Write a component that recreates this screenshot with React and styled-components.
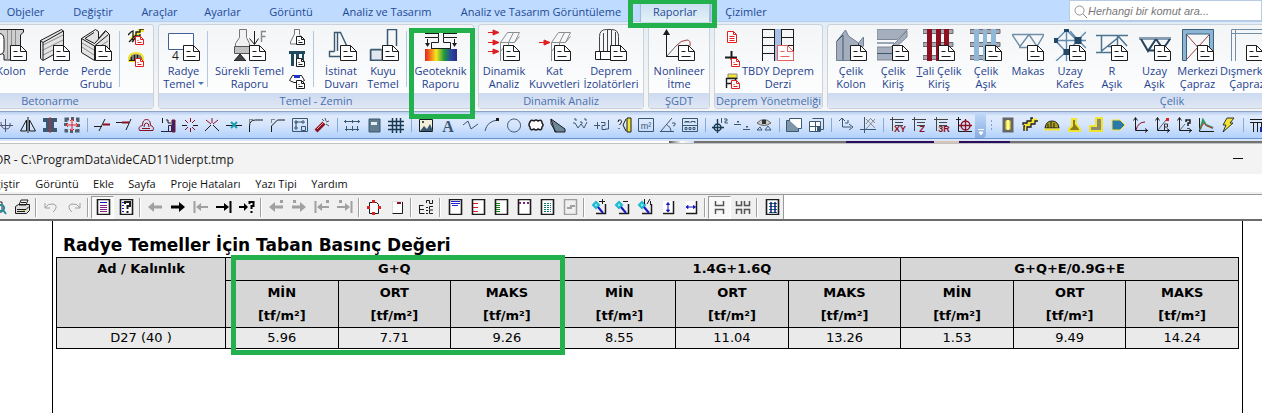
import { useState } from "react";
import styled, { createGlobalStyle, css } from "styled-components";

const INK = "#1c1c1c";
const STEEL = "#3b5872";
const RED = "#e02020";
const MAROON = "#8c1020";
const YELLOW = "#f2e530";
const GREEN = "#23b14d";

const uiFont = css`
  font-family: "Open Sans", "Noto Sans", sans-serif;
  font-size: 11px;
`;

const GlobalStyle = createGlobalStyle`
  *,
  *::after {
    box-sizing: border-box;
  }
  body {
    margin: 0;
    background: #fff;
  }
  button {
    padding: 0;
    border: 0;
    background: none;
    color: inherit;
    font: inherit;
  }
`;

const Shell = styled.div`
  ${uiFont}
  display: flex;
  flex-direction: column;
  min-height: 100vh;
  overflow: hidden;
`;

const highlight = css`
  content: "";
  position: absolute;
  border: 5px solid ${GREEN};
  pointer-events: none;
  z-index: 5;
`;

const TabBar = styled.nav`
  display: flex;
  align-items: flex-start;
  height: 22px;
  background: #bfdbff;
  border-bottom: 1px solid #b4cdec;
  color: #1e4a94;
`;

const Tab = styled.button`
  flex: 0 0 ${(p) => p.$width}px;
  height: 24px;
  line-height: 24px;
  white-space: nowrap;
`;

const ActiveTab = styled(Tab)`
  position: relative;
  height: 22px;
  margin-left: 11px;
  background: linear-gradient(#c6dcf2, #e4f2f7);
  border: solid #a3bedb;
  border-width: 0 1px;
  box-shadow: 1px 0 2px #8fa9c4;

  &::after {
    ${highlight}
    inset: -1px -8px -6px -13px;
  }
`;

const Search = styled.label`
  display: flex;
  align-items: center;
  gap: 1px;
  flex: 0 0 193px;
  height: 21px;
  margin-left: auto;
  padding-left: 3px;
  background: #fff;
  border: 1px solid #b9cbe2;
`;

const SearchInput = styled.input`
  flex: 1;
  min-width: 0;
  padding: 0;
  border: 0;
  outline: 0;
  background: none;
  font: italic 11px "Liberation Sans", Arial, sans-serif;

  &::placeholder {
    color: #777;
  }
`;

const Ribbon = styled.div`
  display: flex;
  gap: 4px;
  height: 89px;
  margin-left: -54px;
  padding: 2px 0 2px;
  background: linear-gradient(#e0edf6, #eef1f4 30%, #f4f5f6);
`;

const Group = styled.section`
  display: flex;
  flex-direction: column;
  flex: 0 0 ${(p) => p.$width}px;
  border: 1px solid #cbd2da;
  border-radius: 3px;
  background: linear-gradient(#f3f5f7, #fff);
`;

const GroupItems = styled.div`
  display: flex;
  flex: 1;
  padding-left: ${(p) => p.$indent}px;
`;

const GroupTitle = styled.h2`
  height: 15px;
  margin: 0;
  background: linear-gradient(#ccdaf0, #e0e7f4);
  color: #4a70ae;
  font-size: 11px;
  font-weight: 400;
  line-height: 16px;
  text-align: center;
  white-space: nowrap;
`;

const BigButton = styled.button`
  display: flex;
  flex-direction: column;
  align-items: center;
  flex: 0 0 ${(p) => p.$width}px;
  min-width: 0;
  padding-top: 4px;
  color: #1e3f8f;
  line-height: 13px;
  white-space: nowrap;

  ${(p) =>
    p.$marked &&
    css`
      position: relative;

      &::after {
        ${highlight}
        inset: 3px -2px -26px 1px;
      }
    `}
`;

const Label = styled.span`
  display: block;
  padding-top: 3px;
`;

const Caret = styled.i`
  display: inline-block;
  margin: 0 0 3px 3px;
  border: solid transparent;
  border-width: 3px 3px 0;
  border-top-color: #4a78b8;
`;

const RibbonSeparator = styled.span`
  flex: 0 0 ${(p) => p.$width}px;
  height: 56px;
  margin-top: 6px;
  background: linear-gradient(#b4c7e0, #b4c7e0) center / 1px 100% no-repeat;
`;

const SmallStack = styled.div`
  display: flex;
  flex-direction: column;
  align-items: center;
  gap: 6px;
  flex: 0 0 ${(p) => p.$width}px;
  padding-top: 4px;
`;

const StackButton = styled.button`
  display: flex;
`;

const ToolStrip = styled.div`
  display: flex;
  align-items: center;
  height: 28px;
  border-top: 1px solid #8fa5c4;
  border-bottom: 1px solid #6792cf;
  background: linear-gradient(#b8cff0, #dfeafc 15%, #d6e5fc 50%, #b1d1fc);
`;

const Tool = styled.button`
  display: flex;
  align-items: center;
  justify-content: center;
  flex: 0 0 22px;
  height: 24px;

  &:first-child {
    margin-left: -5px;
  }
`;

const ToolDivider = styled.span`
  flex: 0 0 8px;
  height: 14px;
  background: linear-gradient(#84aade, #84aade) 4px 0 / 1px 100% no-repeat;
`;

const Overflow = styled.span`
  display: flex;
  align-items: flex-end;
  justify-content: center;
  flex: 0 0 11px;
  height: 26px;
  padding-bottom: 2px;
  border-radius: 0 4px 4px 0;
  background: linear-gradient(#c3daf9, #86acdf);
`;

const Grip = styled.span`
  flex: 0 0 11px;
  height: 13px;
  background: radial-gradient(#7aa3da 1px, transparent 1px) 3px 0 / 5px 4px;
  background-repeat: repeat-y;
`;

const Backdrop = styled.div`
  height: 5px;
  border-top: 2px solid #d8e5f6;
  border-bottom: 1px solid #c2c2c2;
  background: linear-gradient(
    90deg,
    #fff 53%,
    #555 53%,
    #fff 54%,
    #c9daf0 55%,
    #70736f 55%,
    #70736f 67%,
    #2a0d5c 67%,
    #2a0d5c 74%,
    #d8c4b8 74%,
    #d8c4b8 76%,
    #2a0d5c 76%,
    #2a0d5c 80%,
    #70736f 80%
  );
`;

const TitleBar = styled.header`
  display: flex;
  align-items: center;
  justify-content: space-between;
  height: 30px;
  padding-right: 19px;
  background: #f3f3f3;
  color: #1a1a1a;
`;

const WindowTitle = styled.h1`
  margin: 0 0 0 -6px;
  font-size: 12px;
  font-weight: 400;
  white-space: nowrap;
`;

const Minimize = styled.button`
  width: 10px;
  height: 10px;
  background: linear-gradient(#111, #111) 0 4px / 100% 1px no-repeat;
`;

const MenuBar = styled.nav`
  display: flex;
  height: 20px;
  margin-left: -28px;
  border-bottom: 2px solid #f0f0f0;
  background: #fff;
  color: #111;
`;

const MenuItem = styled.button`
  flex: 0 0 ${(p) => p.$width}px;
  line-height: 20px;
  white-space: nowrap;
`;

const ReportTools = styled.div`
  display: flex;
  height: 27px;
  border-top: 1px solid #999;
  border-bottom: 2px solid #6c6c6c;
`;

const ReportToolSet = styled.div`
  display: flex;
  align-items: center;
  margin-left: -13px;
  background: #f0f0f0;
  border-right: 1px solid #999;
`;

const ReportTool = styled.button`
  display: flex;
  align-items: center;
  justify-content: center;
  flex: 0 0 23px;
  height: 23px;
  background: ${(p) => (p.$pressed ? "#f8f8f8" : "none")};
  border: 1px solid transparent;
  border-color: ${(p) => (p.$pressed ? "#999 #fff #fff #999" : "transparent")};
`;

const ReportDivider = styled.span`
  flex: 0 0 6px;
  height: 19px;
  background: linear-gradient(90deg, #a0a0a0 50%, #fff 50%) 2px 0 / 2px 100%
    no-repeat;
`;

const Page = styled.main`
  flex: 1;
  margin: 0 19px 0 52px;
  padding: 12px 3px 0;
  border: solid #000;
  border-width: 0 1px;
  color: #000;
  font-family: "DejaVu Sans", Verdana, sans-serif;
`;

const ReportTitle = styled.h2`
  margin: 0;
  padding-left: 7px;
  font-size: 17px;
  line-height: 24px;
`;

const ReportTable = styled.table`
  width: 100%;
  table-layout: fixed;
  border-collapse: collapse;
  font-size: 13px;
  text-align: center;
`;

const NameColumn = styled.col`
  width: 169px;
`;

const HeadCell = styled.th`
  padding: 0;
  border: 1px solid #000;
  background: #d6d6d6;
  line-height: ${(p) => (p.$units ? 23 : 22)}px;
  vertical-align: top;

  ${(p) =>
    p.$marked &&
    css`
      position: relative;

      &::after {
        ${highlight}
        top: -3px;
        left: 5px;
        right: -2px;
        height: 100px;
      }
    `}
`;

const Cell = styled.td`
  padding: 0;
  border: 1px solid #000;
  background: #eaeaea;
  line-height: 20px;
`;

// Each stroke is [path, stroke, fill, width].
const Strokes = ({ of }) =>
  of.map(([d, stroke = INK, fill = "none", width = 1], i) => (
    <path key={i} d={d} stroke={stroke} fill={fill} strokeWidth={width} />
  ));

const Glyph = ({ of, size = 16, children }) => (
  <svg
    width={size}
    height={size}
    viewBox={`0 0 ${size} ${size}`}
    aria-hidden="true"
  >
    <Strokes of={of} />
    {children}
  </svg>
);

const sheet = (color = INK) => [
  ["M15.5 16.5h10l6 6v9h-16z", color, "#fff"],
  ["M25.5 16.5v6h6M18.5 22.5h4M18.5 27.5h9", color],
];

const smallSheet = (color = INK) => [
  ["M7.5 7.5h5l3 3v5h-8z", color, "#fff"],
  ["M12.5 7.5v3h3M9.5 11.5h1M9.5 13.5h4", color],
];

const FRAME = "M19.5 3.5h12l-5 10h-14zM25.5 3.5l-5 10M12.5 13.5V32M20.5 13.5V22M12.5 22.5l4-5M26.5 13.5l5-6";
const arrowRight = (y) => `M0 ${y}h6M5 ${y - 2.5}l6 2.5l-6 2.5z`;

const big = {
  kolon: [
    ["M4 .5H28.5V3L25.5 6V31H9V26L4 22z", INK, "#cfcfcf"],
    ["M12.5 1v30M16.5 1v30M20.5 1v30", "#8b8b8b"],
    ["M4 4.5q5 0 5 6v10q0 5-5 5", INK, "#fff"],
  ],
  perde: [
    ["M2.5 11.5L23.5.5l2 1.5v18L5 31.5l-2.5-2z", INK, "#e4e4e4"],
    ["M5 16L25 6M5 21l20-10M5 26l20-10", "#8b8b8b"],
    ["M2.5 11.5L5 13.5V31M5 13.5L25.5 2", INK],
  ],
  perdeGrubu: [
    ["M1.5 9.5L15.5.5l3 2v7l7-8 4 4V22L14.5 31.5l-13-8z", INK, "#e4e4e4"],
    ["M2 14l12 7 14-9M2 18l12 8 14-9", "#8b8b8b"],
    ["M1.5 9.5l13 7.5v14M14.5 17l14-11.5M5 9.5l9-6M5 9.5l9.5 5 11-12", INK],
  ],
  radye: [["M.5 4.5h25v16H.5z", "#3d5f9a", "#fff"]],
  surekli: [
    ["M5.5.5h7v8l3 6v3H1.5v-3l4-6z", "#777", "#f1f1f1"],
    ["M.5 17.5h16v7H.5z", "#555", "#c2c2c2"],
    ["M6 25l6 7H0z", INK, "#444"],
    ["M20.5 2v13M15.5 9.5l5 6 4-6", INK],
    ["M27.5 13V2.5h5M27.5 7.5h4", "#888", "none", 1.4],
  ],
  istinat: [
    ["M9.5 22.5V3.5h6l7 15M9.5 22.5h-5v5H15M12.5 22V3.5", STEEL, "none", 1.4],
  ],
  kuyu: [
    ["M20.5 22V.5h9V17M3.5 20.5h11M3.5 20.5v11H15", STEEL, "none", 1.5],
    ["M4 21h11v10H4z", STEEL, "#e2e7ed"],
  ],
  geoteknik: [
    ["M0 8.5h13.5V4M0 4.5h13.5V0M32 8.5H18.5V0M32 4.5H18.5", INK],
    ["M6.5 20v-6.5h7V9M25.5 20v-6.5h-7V9M6 19.5h20", INK],
    ["M2.5 10v5M29.5 10v5", INK],
    ["M0 14h5l-2.5 4zM27 14h5l-2.5 4z", "none", INK],
  ],
  dinamik: [
    [FRAME, "#8d8d8d"],
    [arrowRight(3.5) + arrowRight(13.5) + arrowRight(22.5), RED, RED],
  ],
  kat: [
    [FRAME, "#8d8d8d"],
    [arrowRight(13.5), RED, RED],
  ],
  izolator: [
    ["M4.5 23V7.5q0-7 7-7h5q7 0 7 7V22M8.5 23V4M12.5 23V1M16.5 23V1M20.5 20V3", "#444"],
    ["M.5 22.5h17v8H.5zM5.5 22.5v8", INK, "#fff"],
  ],
  nonlineer: [
    ["M3.5 28V4M3.5 27.5H16", INK],
    ["M0 6h7L3.5 0z", "none", INK],
    ["M4 27L13 17", "#666"],
    ["M13 17q5-6 11-6q4 0 3 6", "#a33c3c"],
  ],
  tbdy: [
    ["M13 0h6v32h-6z", "none", "#a7c0e6"],
    ["M.5 0v32M12.5 0v32M19.5 0v32M31.5 0v32M0 .5h13M0 8.5h13M0 16.5h13M0 24.5h13M19 .5h13M19 8.5h13M19 16.5h13", INK],
  ],
  celikKolon: [
    ["M1.5 31.5v-19L10.5 1l3 6 10 7 5-6v9L15 31.5z", "#6f7f95", "#a5aebd"],
    ["M8 31V6M1.5 12.5L8 6M23.5 14v8", STEEL],
  ],
  celikKiris: [
    ["M0 0h31L20 10.5H0z", "#7b8794", "#a5aebd"],
    ["M0 18h14L30 2v6L18 19v12H0z", "#7b8794", "#a5aebd"],
    ["M0 24.5h17M0 14h17", STEEL],
  ],
  tali: [
    ["M0 .5h30v4H0zM0 13.5h30v4H0zM0 26.5h30v4H0z", "#6b6b78", "#a9a9b4"],
    ["M4.5 0h4v32h-4zM13.5 0h4v32h-4zM21.500 0h4v32h-4z", MAROON, MAROON],
  ],
  asik: [
    ["M0 .5h30v4H0zM0 13.5h30v4H0zM0 26.5h30v4H0z", "#6b6b78", "#a9a9b4"],
    ["M4 0h5v32H4zM13 0h4v32h-4zM21 0h5v32h-5z", "none", "#8fb8d8"],
  ],
  makas: [
    ["M0 5.5h32M0 5.5l8 12 9-12 8 12 7-12M7 18.5h18", "#6f8fa8", "none", 1.4],
  ],
  uzayKafes: [
    ["M12.5 1L1.5 12l11 11 11-11zM12.5 0v32M0 11.5h32M24 11L32 3M24 11l8 8M24 11l-8-9M12 23L2 32M12 23l-8-9", "#5f8cb0", "none", 1.4],
    ["M20.5 8h7v7h-7zM9.5 20h6v6h-6zM10 0h5v3h-5zM0 9h4v5H0z", "none", "#234766"],
  ],
  rAsik: [
    ["M0 6.5h32M0 23.5h16M5.5 7v16M5.5 22L23 8l8 9M12 17.5h14M21.5 7v10", "#4c7390", "none", 1.5],
  ],
  uzayAsik: [
    ["M0 9.5h32M2 10l7 12 8-12 7 10 7-10M8 21.5h16", "#27425c", "none", 2],
    ["M0 9.5h32", "#7fa3be"],
  ],
  merkezi: [
    ["M.5.5h31v31h-4V5h-23v26.5h-4z", "#38607f", "#8db4d2"],
    ["M5 6l21 24M27 6L5 30", "#a84040"],
  ],
  dismerkez: [
    ["M.5 32V.5H32M4.5 32V4.5H32M.5 4.5h4V.5", "#6f8fa8"],
  ],
};

const small = {
  stairs: [
    ["M7 4.5h4v-3h5M3 10l4-4", YELLOW, "none", 3],
    ["M0 6l3-3 2-1v11M1 13L8 6V3h4V0h4M4 13l5-6h3V5", INK, "none", 1.3],
  ],
  dome: [
    ["M.5 10q0-8 7.5-8t7.5 8z", YELLOW, "#777", 2],
    ["M3.5 10V6M6.5 10V4M9.5 10V4M1 9.5h14", INK],
  ],
  footing: [["M5.5 0v5l-4 8v2h7M5.5.5h5v5l2 3", "#777", "#fff"]],
  piles: [["M0 0h16v3H0zM2 3h3v12H2zM7 3h3v12H7zM13 3h2v6h-2z", "none", "#1d4a5e"]],
  raft: [
    ["M.5 7.5l3-5h9l3 5-4 2H5z", INK, "#fff"],
    ["M5 2h6v3H5z", "none", "#2233cc"],
  ],
  sheetOnly: [
    ["M3.5 2.5h6l3 3v8h-9z", RED, "#fff"],
    ["M9.5 2.5v3h3M5.5 7.5h5M5.5 9.5h5M5.5 11.5h5", RED],
  ],
  joint: [["M7.5 0v9M1 6.5h12", INK, "none", 2]],
  storey: [
    ["M4 1h9v4H4z", "#888", YELLOW],
    ["M2.5 15V5.5h11M2.5 10.5h6M11.5 6v4", INK, "none", 1.4],
  ],
};

const stacked = (shape, color) => [...shape, ...smallSheet(color)];

const ribbonGroups = [
  {
    title: "Betonarme",
    width: 208,
    indent: 43,
    items: [
      { icon: "kolon", lines: ["Kolon"], width: 42 },
      { icon: "perde", lines: ["Perde"], width: 43 },
      { icon: "perdeGrubu", lines: ["Perde", "Grubu"], width: 42 },
      { separator: 5 },
      {
        width: 28,
        stack: [
          ["Merdiven", stacked(small.stairs, RED)],
          ["Kubbe", stacked(small.dome, RED)],
        ],
      },
    ],
  },
  {
    title: "Temel - Zemin",
    width: 315,
    indent: 4,
    items: [
      { icon: "radye", lines: ["Radye", "Temel"], width: 41, caret: true },
      { separator: 6 },
      { icon: "surekli", lines: ["Sürekli Temel", "Raporu"], width: 79 },
      {
        width: 16,
        stack: [
          ["Tekil Temel", stacked(small.footing)],
          ["Kazık", stacked(small.piles)],
          ["Kazık Başlığı", stacked(small.raft)],
        ],
      },
      { separator: 16 },
      { icon: "istinat", lines: ["İstinat", "Duvarı"], width: 40 },
      { icon: "kuyu", lines: ["Kuyu", "Temel"], width: 44 },
      { separator: 3 },
      {
        icon: "geoteknik",
        lines: ["Geoteknik", "Raporu"],
        width: 65,
        marked: true,
        plain: true,
      },
    ],
  },
  {
    title: "Dinamik Analiz",
    width: 166,
    indent: 2,
    items: [
      { icon: "dinamik", lines: ["Dinamik", "Analiz"], width: 46 },
      { icon: "kat", lines: ["Kat", "Kuvvetleri"], width: 55 },
      { icon: "izolator", lines: ["Deprem", "İzolatörleri"], width: 58 },
    ],
  },
  {
    title: "ŞGDT",
    width: 62,
    indent: 0,
    items: [{ icon: "nonlineer", lines: ["Nonlineer", "İtme"], width: 60 }],
  },
  {
    title: "Deprem Yönetmeliği",
    width: 109,
    indent: 4,
    items: [
      {
        width: 26,
        stack: [
          ["Düzensizlik Raporu", small.sheetOnly],
          ["Birleşim Raporu", stacked(small.joint, RED)],
          ["Kat Raporu", stacked(small.storey, RED)],
        ],
      },
      { icon: "tbdy", lines: ["TBDY Deprem", "Derzi"], width: 66, color: "#e86060" },
    ],
  },
  {
    title: "Çelik",
    width: 690,
    indent: 2,
    items: [
      { icon: "celikKolon", lines: ["Çelik", "Kolon"], width: 42 },
      { icon: "celikKiris", lines: ["Çelik", "Kiriş"], width: 42 },
      { icon: "tali", lines: [<><u>T</u>ali Çelik</>, "Kiriş"], width: 50 },
      { icon: "asik", lines: ["Çelik", "Aşık"], width: 44 },
      { icon: "makas", lines: ["Makas"], width: 40 },
      { icon: "uzayKafes", lines: ["Uzay", "Kafes"], width: 44 },
      { icon: "rAsik", lines: ["R", "Aşık"], width: 40 },
      { icon: "uzayAsik", lines: ["Uzay", "Aşık"], width: 45 },
      { icon: "merkezi", lines: ["Merkezi", "Çapraz"], width: 41 },
      { icon: "dismerkez", lines: ["Dışmerkez", "Çapraz"], width: 58 },
    ],
  },
];

const AXES = "M3.5 1v12.5H16M1.5 3.5l2-3 2 3M13 11.5l2.5 2-2.5 2";
const AXIS_BOX = "M2.5 0v14M0 2.5h14M5 5.5h8M5 8.5h8";

// null is a divider, a third value is text drawn over the strokes.
const tools = [
  ["Döndür", [["M0 8.5h15M7.5 2v13M3 5q0 7 5 7t4-6", "#557"]]],
  ["Aynala", [["M6.5 3v11h-6zM9.5 3v11h6z", INK], ["M8 0v16", INK]]],
  ["Hizala", [["M1 1h14v4h-3v6h3v4H1v-4h3V5H1z", "none", STEEL], ["M8 0v16", RED]]],
  ["Taşı", [["M2 5V2h3M7 1.5h3M12 2h2v3M14.500 7v3M14 12v2h-3M9 14.500H6M4 14H2v-2M1.500 9V6", "#4c6070", "none", 3], ["M2 8h12M8 2v12M6 4l2-2 2 2M6 12l2 2 2-2M4 6L2 8l2 2M12 6l2 2-2 2", RED]]],
  null,
  ["Kes", [["M0 9.5h8M5 14l6-12", INK], ["M9 7.5h7", MAROON, "none", 2]]],
  ["Uzat", [["M0 5.5h6M10 13l5-11", INK], ["M6 5.5h7", MAROON, "none", 2]]],
  ["Ötele", [["M1.5 13.5q-2-4 3-5q0-6 4-6t4 6q4 1 2.5 5z", MAROON], ["M4 11.5h8M6 10q0-4 2.5-4t2.5 4", MAROON]]],
  ["Ölçekle", [["M1 14.5h14M8.5 14V8.5h3V14", "#224"], ["M12 3h3v12h-3z", MAROON, "#1a2a88"], ["M2.5 1v5M6 3h2v3h3", INK]]],
  ["Böl", [["M0 8.5h5M11 8.5h5", INK], ["M8.5 1v4M8.5 11v4M3 3l3 3M13 3l-3 3M10 10l3 3M6 10l-3 3", MAROON]]],
  ["Birleştir", [["M1 14l6-6M15 14L9 8", INK], ["M8 1v5M2 3l5 4M14 3L9 7", MAROON]]],
  ["Yakala", [["M0 8.5h16", INK], ["M5 5l6 6M11 5l-6 6", "#1a9bb0", "none", 2]]],
  ["Yuvarlat", [["M1.5 15V9q0-6 6-6H15", INK], ["M1.5 2v4M1 2.5h4", "#888"]]],
  ["Pah", [["M1.5 15V9l6-6H15", INK], ["M1.5 2v4M1 2.5h4", "#888"]]],
  ["Gruplandır", [["M.5 1.5h15v13H.5z", STEEL], ["M3 4h2v2H3zM10 4h2v2h-2zM3 10h2v2H3zM9.5 9.5h4v4h-4zM4 5h6M4 5v5", STEEL]]],
  ["Patlat", [["M2 14L10 6", MAROON, "none", 4], ["M3 12l7-7", "#f0a0a0"], ["M11 1l1 3M15 4l-3 1M15 9l-3-2M8 2l2 2", "#555"]]],
  null,
  ["Ölçü", [["M1.5 3v3M8.5 3v3M14.5 3v3M0 4.5h16M2.5 9v5M8.5 9v5M13.5 9v5M1 12.5h14", STEEL]]],
  ["Kütüphane", [["M3 2h11v13H3z", STEEL, "#5f7d8f"], ["M5 5h6v3H5z", "none", "#e5eef2"]]],
  ["Izgara", [["M0 4.5h16M0 8.5h16M0 12.5h16M4.5 1v15M8.5 1v15M12.5 1v15", "#173a50", "none", 1.5]]],
  null,
  ["Resim", [["M1.5 2.5h13v12h-13z", INK, "#f3efd8"], ["M2 14l4-5 3 3 3-5 3 7z", "none", STEEL], ["M4 4h2v2H4z", "none", STEEL]]],
  ["Metin", [], "A"],
  ["Çoklu Çizgi", [["M1 8l5-4 3 8 7-5", STEEL]]],
  ["Yay", [["M1 14q2-10 13-11", STEEL], ["M12 1h3v3h-3z", "none", INK]]],
  ["Daire", [["M8 2a6.5 6.5 0 1 0 .1 0z", STEEL]]],
  ["Revizyon Bulutu", [["M2 5q1-3 4-1q2-2 4 0q4-2 4 2q2 2 0 4q0 4-4 2q-2 2-4 0q-4 2-4-2q-2-2 0-5z", INK, "#fff", 1.5]]],
  ["Tarama", [["M1 2l14 10v3H5z", INK, "#6c8798"], ["M1 2v5l5 8", INK]]],
  ["Eğri", [["M1 6h2l3 5 3-4 3 4 3-6", STEEL], ["M2 2h2v2M8 5h2v2M12 2h2v2", STEEL]]],
  ["Kot", [["M0 8.5h6M3.5 5v7M7 5.5h4v3H8v4h4M14.5 3v9h-3", STEEL]]],
  ["Sorgula", [["M2 5q0-3 2.5-2t-1 5M3 11v1M10 2l-3 6 3 6", INK], ["M11 1h4v14h-4z", INK, YELLOW]]],
  ["Alan", [["M.5 1.5h15v13H.5z", STEEL]], "m²"],
  ["Açı", [["M0 14.5h14M1 14L12 1M7 8q4 2 4 6", STEEL], ["M12 6h3v2l-2 1", STEEL]]],
  ["Metraj", [["M.5 1.5h15v13H.5zM.5 8.5h15M3 6V4.5h4V6M5 6V4M9 6V4.5h4V6M3 10.5h2v2H3zM7 10.5h2v2H7zM11 10.5h2v2h-2z", STEEL]]],
  null,
  ["Kot Noktası", [["M0 10.5h12M5.5 2v14M5.5 7a3.5 3.5 0 1 0 .1 0z", "#173a50", "none", 1.4], ["M9.5 1v5M12 2h3v2h-2v2h3", STEEL]]],
  ["Kot Farkı", [["M0 7.5h7M9 12.5h7M3 5l1-1 1 1zM12 10l1-1 1 1z", STEEL]]],
  ["Görünüm", [["M1 6q7-7 14 0q-7 5-14 0z", "#666", "#ccc"], ["M6 3h4v4H6z", "none", "#333"], ["M1 13h5l-2-3zM9 13h6l-3-4z", STEEL]]],
  null,
  ["Katman", [["M3.5 1.5h12v10h-12z", STEEL, "#fff"], ["M3.5 3.5h-3v11h12v-3", STEEL, "#7d95a8"]]],
  ["Pencereler", [["M1.5 4.5h11v10h-11z", STEEL, "#fff"], ["M4.5 1.5h11v11h-3M7.5 4v10M2 9.5h11", STEEL], ["M9 9h4v5H9z", "none", STEEL]]],
  null,
  ["Eksen", [["M1 4l3-3 3 3M4.5 1v9H13M11 7l4 3-4 3M7 6h3v-3", STEEL]]],
  ["Eksen Izgarası", [["M4.5 0v16M0 12.5h16", STEEL], ["M6 2l9 9M10 1l5 5M6 7l4-5M6 12L15 2", "#8a8a8a"]]],
  null,
  ["XY Düzlemi", [[AXIS_BOX, "#444"]], "XY"],
  ["Z Düzlemi", [[AXIS_BOX, "#444"]], "Z"],
  ["3B Düzlem", [[AXIS_BOX, "#444"]], "3R"],
  ["Orijin", [["M2.5 0v14.5H16M0 2.5h5", INK], ["M9.5 4a4.5 4.5 0 1 0 .1 0zM3 8.5h13M9.5 2v13", MAROON, "none", 1.3]]],
];

const modelTools = [
  ["Silindir", [["M4 2h8v12H4z", "#666", YELLOW, 3], ["M8 3v10", "#ffffb0", "none", 2]]],
  ["Merdiven", [["M3 13V8h4V5h4V3h4", YELLOW, "none", 3], ["M1 8V6h4V4h4V1h2M2 14V9h1M5 14v-4h4V7h4V4h3", INK, "none", 1.3]]],
  ["Kubbe", [["M1 11q1-7 7-7t7 7z", INK, "#aaa018"], ["M0 12.5h16", YELLOW, "none", 2], ["M4 11V7M7 11V5M10 11V6", INK]]],
  ["Temel", [["M6 2h4v5l4 5v2H3v-2l3-3z", YELLOW, "#8a7a20", 2]]],
  ["Duvar", [["M8 1h6v13H2v-5h6z", YELLOW, "#8c8c6c", 2]]],
  ["Panel", [["M2 3h8l5 5-5 5H2z", YELLOW, "#2a78a8"]]],
  ["Eğri 1", [[AXES, INK], ["M4 13q2-8 9-8", MAROON]]],
  ["Eğri 2", [[AXES, INK], ["M4 13L12 3", "#666"], ["M12 1h3v3h-3z", "none", RED], ["M10.5 13V7h3v3h-3", "#333"]]],
  ["Eğri 3", [[AXES, INK], ["M4 13L9 7", "#666"], ["M10 5V3h4v3h-2v3M12 11v1", INK, "none", 1.5]]],
  ["Spektrum", [["M1.5 1v13.5H16", INK], ["M2 13l3-10 3 5 7 3", "#2c9a60", "none", 2], ["M2 12l4-6 3 3 6 2", "#c33"]]],
  ["Hesapla", [["M7 1h7l-4 5h3L3 15l3-7H3z", "#333", YELLOW]]],
  null,
  ["Kiriş Donatısı", [["M0 2.5h16M0 5.5h16M3.5 5v10M7.5 5v10M11.5 5v6", INK], ["M10 10h5v5h-5z", "none", "#1a2a99"]]],
];

const PAGE = "M2.5.5h12v15h-12z";
const GREY = "#a0a0a0";

const zoomTool = (mark) => [
  ["M5 14.5h9.5V5", INK, "none", 1.5],
  ["M2 6l3-3 3 3-3 3z", "#20b8d0", "#80f0f0", 2],
  ["M7 8l5 6", "#1818c0", "none", 2],
  [mark, INK],
];

const reportTools = [
  ["Önizleme", [["M3 3h8v10H3z", "#222", "#fff"], ["M10 6a3 3 0 1 0 .1 0zM12 11l3 4", "#2a8a9a", "none", 2]]],
  ["Yazdır", [["M1.5 7.5l3-2h11v6l-3 3h-11z", INK, "#ddd"], ["M5 6l2-5h7l-2 5zM7 3.5h5M3 10.5h9l3-3M3 12.5h8", INK], ["M9 11.5h2", "#d0c000"]]],
  null,
  ["Geri Al", [["M2 4v5h5M2 9q3-5 8-4t2 6l-2 2", GREY]]],
  ["Yinele", [["M14 4v5H9M14 9q-3-5-8-4T4 11l2 2", GREY]]],
  null,
  ["Rapor", [[PAGE, INK, "#fff", 1.6], ["M5 3.5h7", "#1616c0"], ["M5 6.5h7M5 8.5h7M5 10.5h7M5 12.5h7", "#802080"]], true],
  ["Yardım", [[PAGE, INK, "#fff", 1.6], ["M4 3.5h2M4 6.5h2M4 9.5h2M4 12.5h2", "#1616c0"], ["M7 5V3h5v4H9.5v3M9.5 12v2", INK, "none", 2]]],
  null,
  ["Önceki", [["M6 8h9", GREY, "none", 3], ["M1 8l6-5v10z", "none", GREY]]],
  ["Sonraki", [["M1 8h9", "#000", "none", 3], ["M15 8L9 3v10z", "none", "#000"]]],
  ["İlk", [["M7 8h8M1.5 2v12", GREY, "none", 2], ["M3 8l5-4v8z", "none", GREY]]],
  ["Son", [["M0 8h9M14.5 2v12", "#000", "none", 2], ["M13 8L8 4v8z", "none", "#000"]]],
  ["Git", [["M0 8h6", "#000", "none", 2], ["M9 8L5 4v8z", "none", "#000"], ["M10.5 5V3h4v4h-2v3M12.5 12v2", "#000", "none", 2]]],
  null,
  ["Önceki Hata", [["M6 8h9", GREY, "none", 3], ["M1 8l6-5v10zM12 1h3v3h-3z", "none", GREY]]],
  ["Sonraki Hata", [["M1 8h9", GREY, "none", 3], ["M15 8L9 3v10zM2 1h3v3H2z", "none", GREY]]],
  ["İlk Hata", [["M7 8h8M1.5 2v12", GREY, "none", 2], ["M3 8l5-4v8zM12 1h3v3h-3z", "none", GREY]]],
  ["Son Hata", [["M0 8h9M14.5 2v12", GREY, "none", 2], ["M13 8L8 4v8zM2 1h3v3H2z", "none", GREY]]],
  null,
  ["Kenar Boşluğu", [["M3.5 3.5h7l2 2v9h-9z", INK, "#fff"], ["M6 1h3v3H6zM6 13h3v3H6zM1 7h3v3H1zM12 7h3v3h-3z", "none", RED]]],
  ["Sayfa No", [["M3.5 2.5h10v12h-10z", "#ddd", "#fff"], ["M8 3h4v2H8z", "none", MAROON], ["M13.5 3v11.5h-10", INK]]],
  null,
  ["Harf Yönü", [["M1.5 6v8.5h5M1.5 6.500h4M2 10.5h4M8 8.5h2M8 11.5h2M8.500 4V1.500h3V4.500h3V1M15 7.5h-3.500v3M15 14.500h-3.500v-3.500H15M8 14.500h2", INK]]],
  null,
  ["Üst Bilgi", [[PAGE, INK, "#fff", 1.6], ["M4 2.5h9M4 4.5h9M5 6.500h6", "#2222d0"]]],
  ["Sol Kenar", [[PAGE, INK, "#fff", 1.6], ["M3 4.5h5M3 8.5h5M3 12.5h5", RED]]],
  ["Cetvel", [[PAGE, INK, "#fff", 1.6], ["M3 4.5h4M3 6.5h4M3 8.5h4M3 10.5h4M3 12.5h4", "#148014"]]],
  ["Sayfa Sonu", [[PAGE, INK, "#fff", 1.6], ["M3 4h2M7 4h2M11 4h2", "#802080", "none", 2]]],
  ["Sütunlar", [[PAGE, INK, "#fff", 1.6], ["M5 4.5h2M8 4.5h2M11 4.5h1M5 6.5h2M8 6.5h2M11 6.5h1M5 8.5h2M8 8.5h2M11 8.5h1M5 10.5h2M8 10.5h2M11 10.5h1M5 12.5h2M8 12.5h2M11 12.5h1", "#107878"]]],
  ["Grafik", [[PAGE, GREY, "#f0f0f0", 1.5], ["M5 9h4V7h4", GREY, "none", 2]]],
  null,
  ["Yakınlaştır", zoomTool("M8 2.5h6M11.5 0v5")],
  ["Uzaklaştır", zoomTool("M9 2.5h5")],
  ["Gerçek Boyut", zoomTool("M7.5 0v5M10 5l3-5M13.5 2v4")],
  ["Sayfa Boyu", [["M3 2h10v12H3z", "none", "#fff"], ["M3 14.5h10.5V2", INK, "none", 1.5], ["M8 5v6M6.5 5.5L8 3.500l1.500 2zM6.5 11L8 13l1.500-2z", "#1616c0", "#1616c0"]]],
  ["Sayfa Eni", [["M3 2h10v12H3z", "none", "#fff"], ["M3 14.5h10.5V2", INK, "none", 1.5], ["M4 8h8M5 6.500L3 8l2 1.500zM10.500 6.500L12.500 8l-2 1.500z", "#1616c0", "#1616c0"]]],
  null,
  ["Tek Sayfa", [["M3.5 2v4.5h8V2M3.5 15v-4.5h8V15", "#555", "none", 1.5]], true],
  ["Çok Sayfa", [["M1.5 2v4.5h5V2M1.5 15v-4.5h5V15M9.5 2v4.5h5V2M9.5 15v-4.5h5V15", "#555", "none", 1.5]]],
  null,
  ["Tablo", [[PAGE, INK, "#fff", 1.6], ["M5 4.5h8M5 7.5h8M5 10.5h8M5 13.5h8", "#107878"], ["M7 3v11M11 3v11", "#181880", "none", 1.5]]],
];

const GlyphText = styled.text`
  font-family: ${(p) =>
    p.$serif ? '"Liberation Serif", serif' : '"Liberation Sans", sans-serif'};
  font-size: ${(p) => (p.$serif ? 16 : 9)}px;
  font-weight: ${(p) => (p.$plain ? 400 : 700)};
  fill: ${(p) => (p.$serif || p.$plain ? STEEL : MAROON)};
  text-anchor: middle;
`;

const ToolRow = ({ items }) =>
  items.map((item, i) =>
    item ? (
      <Tool key={i} aria-label={item[0]}>
        <Glyph of={item[1]}>
          {item[2] && (
            <GlyphText
              x={item[2] === "m²" || item[2] === "A" ? 8 : 10}
              y={item[2] === "m²" ? 12 : 15}
              $serif={item[2] === "A"}
              $plain={item[2] === "m²"}
            >
              {item[2]}
            </GlyphText>
          )}
        </Glyph>
      </Tool>
    ) : (
      <ToolDivider key={i} />
    )
  );

const SoilGradient = () => (
  <>
    <defs>
      <linearGradient id="soil">
        <stop offset="0" stopColor="#e8201c" />
        <stop offset=".2" stopColor="#f58a1c" />
        <stop offset=".35" stopColor="#f6e81c" />
        <stop offset=".6" stopColor="#1c9a3c" />
        <stop offset=".8" stopColor="#2a4a9a" />
        <stop offset="1" stopColor="#2c2a8a" />
      </linearGradient>
    </defs>
    <rect y="20" width="32" height="12" fill="url(#soil)" />
  </>
);

const RibbonItem = ({ item }) => {
  if (item.separator) return <RibbonSeparator $width={item.separator} />;
  if (item.stack) {
    return (
      <SmallStack $width={item.width}>
        {item.stack.map(([name, shape]) => (
          <StackButton key={name} aria-label={name}>
            <Glyph of={shape} />
          </StackButton>
        ))}
      </SmallStack>
    );
  }
  const shape = item.plain
    ? big[item.icon]
    : [...big[item.icon], ...sheet(item.color)];
  return (
    <BigButton $width={item.width} $marked={item.marked}>
      <Glyph of={shape} size={32}>
        {item.icon === "geoteknik" && <SoilGradient />}
        {item.icon === "radye" && (
          <text x="4" y="31" fontSize="12" fill={INK}>
            4
          </text>
        )}
      </Glyph>
      <Label>
        {item.lines[0]}
        <br />
        {item.lines[1]}
        {item.caret && <Caret />}
      </Label>
    </BigButton>
  );
};

const tabs = [
  ["Objeler", 51],
  ["Değiştir", 84],
  ["Araçlar", 49],
  ["Ayarlar", 77],
  ["Görüntü", 60],
  ["Analiz ve Tasarım", 132],
  ["Analiz ve Tasarım Görüntüleme", 176],
  ["Raporlar", 70],
  ["Çizimler", 72],
];

const menus = [
  ["Değiştir", 56],
  ["Görüntü", 58],
  ["Ekle", 35],
  ["Sayfa", 42],
  ["Proje Hataları", 85],
  ["Yazı Tipi", 56],
  ["Yardım", 51],
];

const combinations = ["G+Q", "1.4G+1.6Q", "G+Q+E/0.9G+E"];
const columns = ["MİN", "ORT", "MAKS"];
const rows = [
  {
    name: "D27 (40 )",
    values: ["5.96", "7.71", "9.26", "8.55", "11.04", "13.26", "1.53", "9.49", "14.24"],
  },
];

const PressureTable = () => (
  <ReportTable>
    <colgroup>
      <NameColumn />
      <col span={9} />
    </colgroup>
    <thead>
      <tr>
        <HeadCell rowSpan={2}>Ad / Kalınlık</HeadCell>
        {combinations.map((name, i) => (
          <HeadCell key={name} colSpan={3} $marked={i === 0}>
            {name}
          </HeadCell>
        ))}
      </tr>
      <tr>
        {combinations.map((name) =>
          columns.map((column) => (
            <HeadCell key={name + column} $units>
              {column}
              <br />
              [tf/m²]
            </HeadCell>
          ))
        )}
      </tr>
    </thead>
    <tbody>
      {rows.map((row) => (
        <tr key={row.name}>
          <Cell>{row.name}</Cell>
          {row.values.map((value, i) => (
            <Cell key={i}>{value}</Cell>
          ))}
        </tr>
      ))}
    </tbody>
  </ReportTable>
);

const App = () => {
  const [query, setQuery] = useState("");

  return (
    <Shell>
      <GlobalStyle />
      <TabBar>
        {tabs.map(([name, width]) => {
          const Item = name === "Raporlar" ? ActiveTab : Tab;
          return (
            <Item key={name} $width={width}>
              {name}
            </Item>
          );
        })}
        <Search aria-label="Komut ara">
          <Glyph of={[["M6.5 2a4.5 4.5 0 1 0 .1 0M10 10l4 4", "#8a8a8a"]]} size={14} />
          <SearchInput
            value={query}
            onChange={(evt) => setQuery(evt.target.value)}
            placeholder="Herhangi bir komut ara..."
          />
        </Search>
      </TabBar>
      <Ribbon>
        {ribbonGroups.map((group) => (
          <Group key={group.title} $width={group.width}>
            <GroupItems $indent={group.indent}>
              {group.items.map((item, i) => (
                <RibbonItem key={i} item={item} />
              ))}
            </GroupItems>
            <GroupTitle>{group.title}</GroupTitle>
          </Group>
        ))}
      </Ribbon>
      <ToolStrip>
        <ToolRow items={tools} />
        <Overflow>
          <Glyph of={[["M1 1.5h6M2 4l2 3 2-3z", "#fff", "#fff"]]} size={8} />
        </Overflow>
        <Grip />
        <ToolRow items={modelTools} />
      </ToolStrip>
      <Backdrop />
      <TitleBar>
        <WindowTitle>OR - C:\ProgramData\ideCAD11\iderpt.tmp</WindowTitle>
        <Minimize aria-label="Simge durumuna küçült" />
      </TitleBar>
      <MenuBar>
        {menus.map(([name, width]) => (
          <MenuItem key={name} $width={width}>
            {name}
          </MenuItem>
        ))}
      </MenuBar>
      <ReportTools>
        <ReportToolSet>
          {reportTools.map((item, i) =>
            item ? (
              <ReportTool key={i} aria-label={item[0]} $pressed={item[2]}>
                <Glyph of={item[1]} />
              </ReportTool>
            ) : (
              <ReportDivider key={i} />
            )
          )}
        </ReportToolSet>
      </ReportTools>
      <Page>
        <ReportTitle>Radye Temeller İçin Taban Basınç Değeri</ReportTitle>
        <PressureTable />
      </Page>
    </Shell>
  );
};

export default App;
